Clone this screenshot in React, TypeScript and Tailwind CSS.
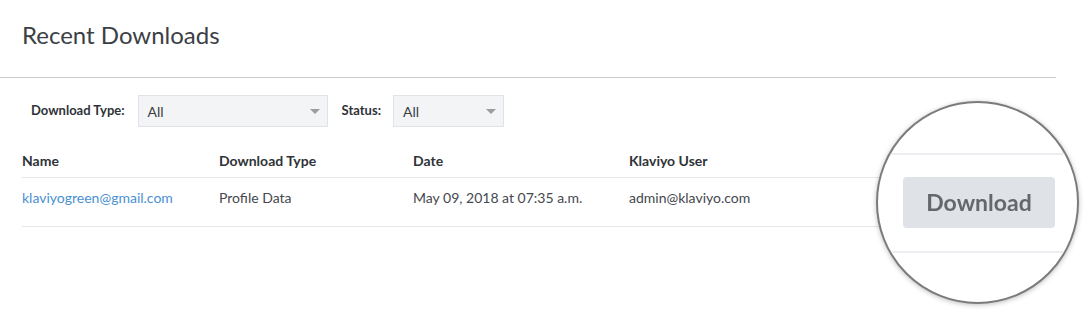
const columns = [
  { label: 'Name', width: 'w-[197px]' },
  { label: 'Download Type', width: 'w-[194px]' },
  { label: 'Date', width: 'w-[216px]' },
  { label: 'Klaviyo User', width: 'w-[240px]' },
]

function Caret() {
  return <span className="h-0 w-0 border-x-[5px] border-t-[5px] border-x-transparent border-t-[#9a9ca0]" />
}

function FilterSelect({ width }: { width: string }) {
  return (
    <div
      className={`flex h-[32px] ${width} items-center justify-between border border-[#e1e3e7] bg-[#f3f4f6] pl-[9px] pr-[7px] text-[14px] text-[#3a3e44]`}
    >
      <span>All</span>
      <Caret />
    </div>
  )
}

function Magnifier() {
  return (
    <div className="absolute left-[876px] top-[101px] h-[203px] w-[203px] overflow-hidden rounded-full border-2 border-[#7b7b7b] bg-white shadow-[0_1px_5px_rgba(0,0,0,0.25)]">
      <div className="absolute left-0 right-0 top-[50px] h-[2px] bg-[#eceef1]" />
      <div className="absolute left-0 right-0 top-[148px] h-[2px] bg-[#eceef1]" />
      <div className="absolute left-[25px] top-[74px] flex h-[51px] w-[152px] items-center justify-center rounded-[4px] bg-[#dfe2e6]">
        <span className="text-[23px] font-bold text-[#64686d] blur-[0.6px]">Download</span>
      </div>
    </div>
  )
}

export default function App() {
  return (
    <div className="relative h-[320px] w-[1092px] overflow-hidden bg-white font-['Lato','Noto_Sans',sans-serif] text-[#44484e]">
      <div className="w-[1056px]">
        <h1 className="pl-[22px] pt-[20px] text-[24px] leading-[30px] text-[#3b3f45]">Recent Downloads</h1>
        <div className="mt-[27px] h-px bg-[#c9cacd]" />
      </div>

      <div className="flex items-center pl-[31px] pt-[17px]">
        <span className="text-[13px] font-bold text-[#2f3338]">Download Type:</span>
        <div className="ml-[13px]">
          <FilterSelect width="w-[190px]" />
        </div>
        <span className="ml-[14px] text-[13px] font-bold text-[#2f3338]">Status:</span>
        <div className="ml-[12px]">
          <FilterSelect width="w-[111px]" />
        </div>
      </div>

      <div className="ml-[22px] mt-[14px] w-[1034px] text-[14px]">
        <div className="flex h-[37px] items-center border-b border-[#e4e6e9] pt-[2px] font-bold text-[#2f3338]">
          {columns.map((c) => (
            <div key={c.label} className={c.width}>
              {c.label}
            </div>
          ))}
        </div>
        <div className="flex h-[49px] items-start border-b border-[#e4e6e9] pt-[10px] leading-[20px]">
          <div className="w-[197px] text-[#4a90d2]">klaviyogreen@gmail.com</div>
          <div className="w-[194px]">Profile Data</div>
          <div className="w-[216px]">May 09, 2018 at 07:35 a.m.</div>
          <div className="w-[240px]">admin@klaviyo.com</div>
        </div>
      </div>

      <Magnifier />
    </div>
  )
}
